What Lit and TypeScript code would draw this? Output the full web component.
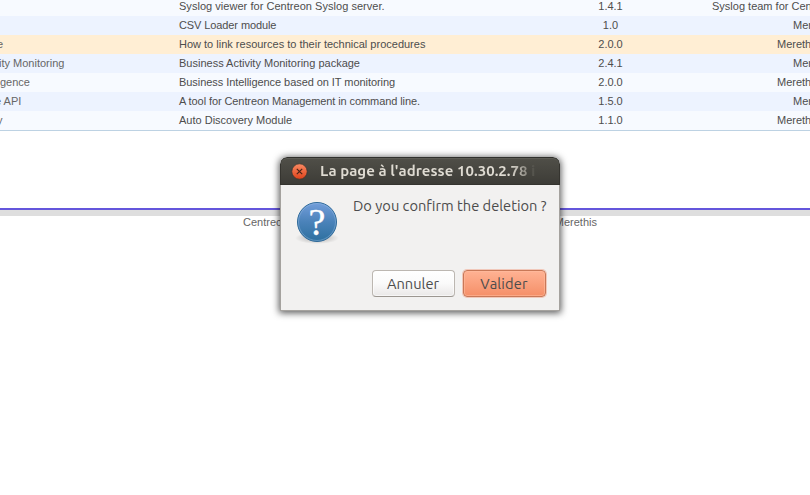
import { LitElement, html, css } from "lit";
import { customElement } from "lit/decorators.js";
import { styleMap } from "lit/directives/style-map.js";

interface Row {
  name: string;
  indent: number;
  info: string;
  spacing: number;
  version: string;
  author: string;
  authorStart: number;
  marked?: boolean;
}

const rows: Row[] = [
  { name: "", indent: 0, info: "Syslog viewer for Centreon Syslog server.", spacing: 0.035, version: "1.4.1", author: "Syslog team for Cent", authorStart: 712 },
  { name: "", indent: 0, info: "CSV Loader module", spacing: -0.1, version: "1.0", author: "Merethis", authorStart: 793 },
  { name: "e", indent: -3, info: "How to link resources to their technical procedures", spacing: 0, version: "2.0.0", author: "Merethis", authorStart: 777, marked: true },
  { name: "ity Monitoring", indent: -1, info: "Business Activity Monitoring package", spacing: 0, version: "2.4.1", author: "Merethis", authorStart: 793 },
  { name: "igence", indent: -2.5, info: "Business Intelligence based on IT monitoring", spacing: -0.06, version: "2.0.0", author: "Merethis", authorStart: 777 },
  { name: "e API", indent: -5, info: "A tool for Centreon Management in command line.", spacing: -0.09, version: "1.5.0", author: "Merethis", authorStart: 793 },
  { name: "y", indent: -3, info: "Auto Discovery Module", spacing: 0, version: "1.1.0", author: "Merethis", authorStart: 777 },
];

@customElement("module-table")
class ModuleTable extends LitElement {
  static styles = css`
    :host { display: block; height: 130px; overflow: hidden; border-bottom: 1px solid #bdd2e3; }
    .rows { margin-top: -3px; }
    .row { display: grid; grid-template-columns: 179px 391px 81px 159px; height: 19px; line-height: 19px; background: #f7faff; white-space: nowrap; }
    .row:nth-child(even) { background: #edf3ff; }
    .row.marked { background: #ffeed4; }
    .name { color: #666; }
    .version { text-align: center; }
    .author { overflow: hidden; }
  `;
  render() {
    return html`<div class="rows">${rows.map(
      (r) => html`<div class="row ${r.marked ? "marked" : ""}">
        <span class="name" style=${styleMap({ textIndent: `${r.indent}px` })}>${r.name}</span>
        <span class="info" style=${styleMap({ letterSpacing: `${r.spacing}px` })}>${r.info}</span>
        <span class="version">${r.version}</span>
        <span class="author" style=${styleMap({ paddingLeft: `${r.authorStart - 651}px` })}>${r.author}</span>
      </div>`
    )}</div>`;
  }
}

@customElement("confirm-dialog")
class ConfirmDialog extends LitElement {
  static styles = css`
    :host { display: flex; flex-direction: column; box-sizing: border-box; width: 280px; height: 154px; border-radius: 7px 7px 0 0; background: #f2f1f0; box-shadow: 0 1px 7px 1px rgba(0,0,0,.65); font-family: Ubuntu, "Noto Sans", sans-serif; color: #4c4c4c; overflow: hidden; white-space: nowrap; }
    .bar { display: flex; align-items: center; box-sizing: border-box; height: 28px; padding-left: 10px; border: 1px solid #35342f; border-top-color: #30302c; border-radius: 7px 7px 0 0; background: linear-gradient(#504f48, #3d3c37); box-shadow: inset 0 1px #5c5b54; flex: none; }
    .close { display: block; flex: none; width: 17px; height: 17px; }
    .title { margin-left: 12px; width: 218px; overflow: hidden; font-size: 15px; font-weight: 700; line-height: 20px; letter-spacing: .03px; background: linear-gradient(90deg, #dfdbd2 190px, #96938b 205px, #57564f 213px, #46453f 218px); background-clip: text; -webkit-background-clip: text; color: transparent; }
    .content { flex: 1; display: flex; flex-direction: column; border: 1px solid #a5a29e; border-top: 0; }
    .message { display: flex; height: 84px; }
    .icon { width: 46px; height: 46px; margin: 15px 0 0 13px; flex: none; }
    .text { margin: 10px 0 0 13px; font-size: 14.67px; line-height: 22px; }
    .buttons { display: flex; justify-content: flex-end; gap: 8px; padding: 1px 13px 0 0; }
    .button { box-sizing: border-box; height: 27px; width: 83px; border: 1px solid #bcb7b1; border-bottom-color: #9c9791; border-radius: 4px; background: linear-gradient(#fff, #fafafa 50%, #eae8e7); box-shadow: inset 0 0 0 1px rgba(255,255,255,.6); color: #4c4c4c; font: 14.67px/25px Ubuntu, "Noto Sans", sans-serif; padding: 0 1px 0 0; text-align: center; }
    .default { font-kerning: none; letter-spacing: .15px; border-color: #c97857; background: linear-gradient(#ffb293, #f58f68); box-shadow: inset 0 0 0 1px rgba(255,190,160,.55), 0 0 0 1px rgba(240,150,120,.45); }
    .mark { font: 38px "Liberation Serif", serif; fill: #fff; stroke: #fff; stroke-width: .3; }
  `;
  render() {
    return html`
      <div class="bar">
        <svg class="close" viewBox="0 0 17 17">
          <defs><linearGradient id="c" x2="0" y2="1"><stop stop-color="#f98a63" /><stop offset="1" stop-color="#df421a" /></linearGradient></defs>
          <circle cx="8.5" cy="8.5" r="7.7" fill="url(#c)" stroke="#37352f" stroke-width=".7" />
          <path d="M5.8 5.8l5.4 5.4M11.2 5.8l-5.4 5.4" stroke="#4a2417" stroke-width="1.2" />
        </svg>
        <span class="title">La page à l'adresse 10.30.2.78 i</span>
      </div>
      <div class="content">
        <div class="message">
          <svg class="icon" viewBox="0 0 46 46">
            <defs>
              <linearGradient id="q" x2="0" y2="1"><stop stop-color="#739edb" /><stop offset=".5" stop-color="#4a82b9" /><stop offset="1" stop-color="#2d709f" /></linearGradient>
              <radialGradient id="s"><stop stop-color="#000" stop-opacity=".3" /><stop offset="1" stop-color="#000" stop-opacity="0" /></radialGradient>
            </defs>
            <ellipse cx="23" cy="38" rx="22" ry="6" fill="url(#s)" />
            <circle cx="23" cy="22" r="19.5" fill="url(#q)" stroke="#2f6a9a" />
            <circle cx="23" cy="22" r="18.5" fill="none" stroke="#a1c2e6" stroke-opacity=".4" />
            <text class="mark" x="23" y="34.5" text-anchor="middle">?</text>
          </svg>
          <span class="text">Do you confirm the deletion ?</span>
        </div>
        <div class="buttons">
          <button class="button">Annuler</button>
          <button class="button default">Valider</button>
        </div>
      </div>`;
  }
}

@customElement("app-root")
class AppRoot extends LitElement {
  static styles = css`
    :host { display: block; position: relative; width: 810px; height: 495px; overflow: hidden; background: #fff; font: 11px "Liberation Sans", Arial, sans-serif; color: #4d4d4d; }
    .footer { margin-top: 77px; border-top: 2px solid #6456dc; }
    .band { height: 6px; background: #dedede; }
    .credits { display: flex; justify-content: space-between; width: 354px; margin-left: 243px; line-height: 13px; color: #666; }
    .dialog { position: absolute; left: 280px; top: 157px; }
  `;
  render() {
    return html`
      <module-table></module-table>
      <div class="footer">
        <div class="band"></div>
        <div class="credits"><span>Centreon</span><span>Merethis</span></div>
      </div>
      <confirm-dialog class="dialog"></confirm-dialog>`;
  }
}
